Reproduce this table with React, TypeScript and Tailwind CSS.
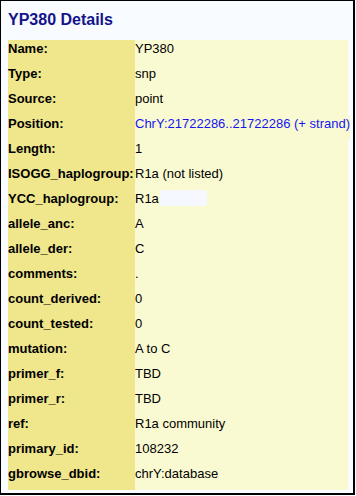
import React from "react";

interface DetailRow {
  label: string;
  value: string;
  link?: boolean;
  masked?: boolean;
}

const rows: DetailRow[] = [
  { label: "Name:", value: "YP380", link: false },
  { label: "Type:", value: "snp" },
  { label: "Source:", value: "point" },
  { label: "Position:", value: "ChrY:21722286..21722286 (+ strand)", link: true },
  { label: "Length:", value: "1" },
  { label: "ISOGG_haplogroup:", value: "R1a (not listed)" },
  { label: "YCC_haplogroup:", value: "R1a", masked: true },
  { label: "allele_anc:", value: "A" },
  { label: "allele_der:", value: "C" },
  { label: "comments:", value: "." },
  { label: "count_derived:", value: "0" },
  { label: "count_tested:", value: "0" },
  { label: "mutation:", value: "A to C" },
  { label: "primer_f:", value: "TBD" },
  { label: "primer_r:", value: "TBD" },
  { label: "ref:", value: "R1a community" },
  { label: "primary_id:", value: "108232" },
  { label: "gbrowse_dbid:", value: "chrY:database" },
];

export default function App() {
  return (
    <div className="w-[356px] h-[496px] bg-white font-['Liberation_Sans',Arial,sans-serif]">
      <div className="w-[355px] h-[495px] border-t border-l border-r-2 border-b-2 border-black bg-[#f8fbff] px-[7px]">
        <h2 className="pt-[10px] mb-[11px] text-[16px] leading-[18px] font-bold text-[#14148a]">
          YP380 Details
        </h2>
        <div className="w-[340px] flex flex-col">
          {rows.map((row) => (
            <div key={row.label} className="flex h-[25px]">
              <div className="w-[127px] shrink-0 bg-[#f0e68c] pt-[1px] text-[13px] leading-[16px] font-bold text-black whitespace-nowrap">
                {row.label}
              </div>
              <div className="flex-1 bg-[#fafad2] pt-[1px] text-[13px] leading-[16px] whitespace-nowrap">
                {row.link ? (
                  <span className="text-[#1515f0]">{row.value}</span>
                ) : (
                  <span className="text-black">{row.value}</span>
                )}
                {row.masked && (
                  <span className="inline-block align-top ml-[1px] mt-[-1px] w-[47px] h-[16px] rounded-[3px] bg-[#f5f9ff]" />
                )}
              </div>
            </div>
          ))}
        </div>
      </div>
    </div>
  );
}
